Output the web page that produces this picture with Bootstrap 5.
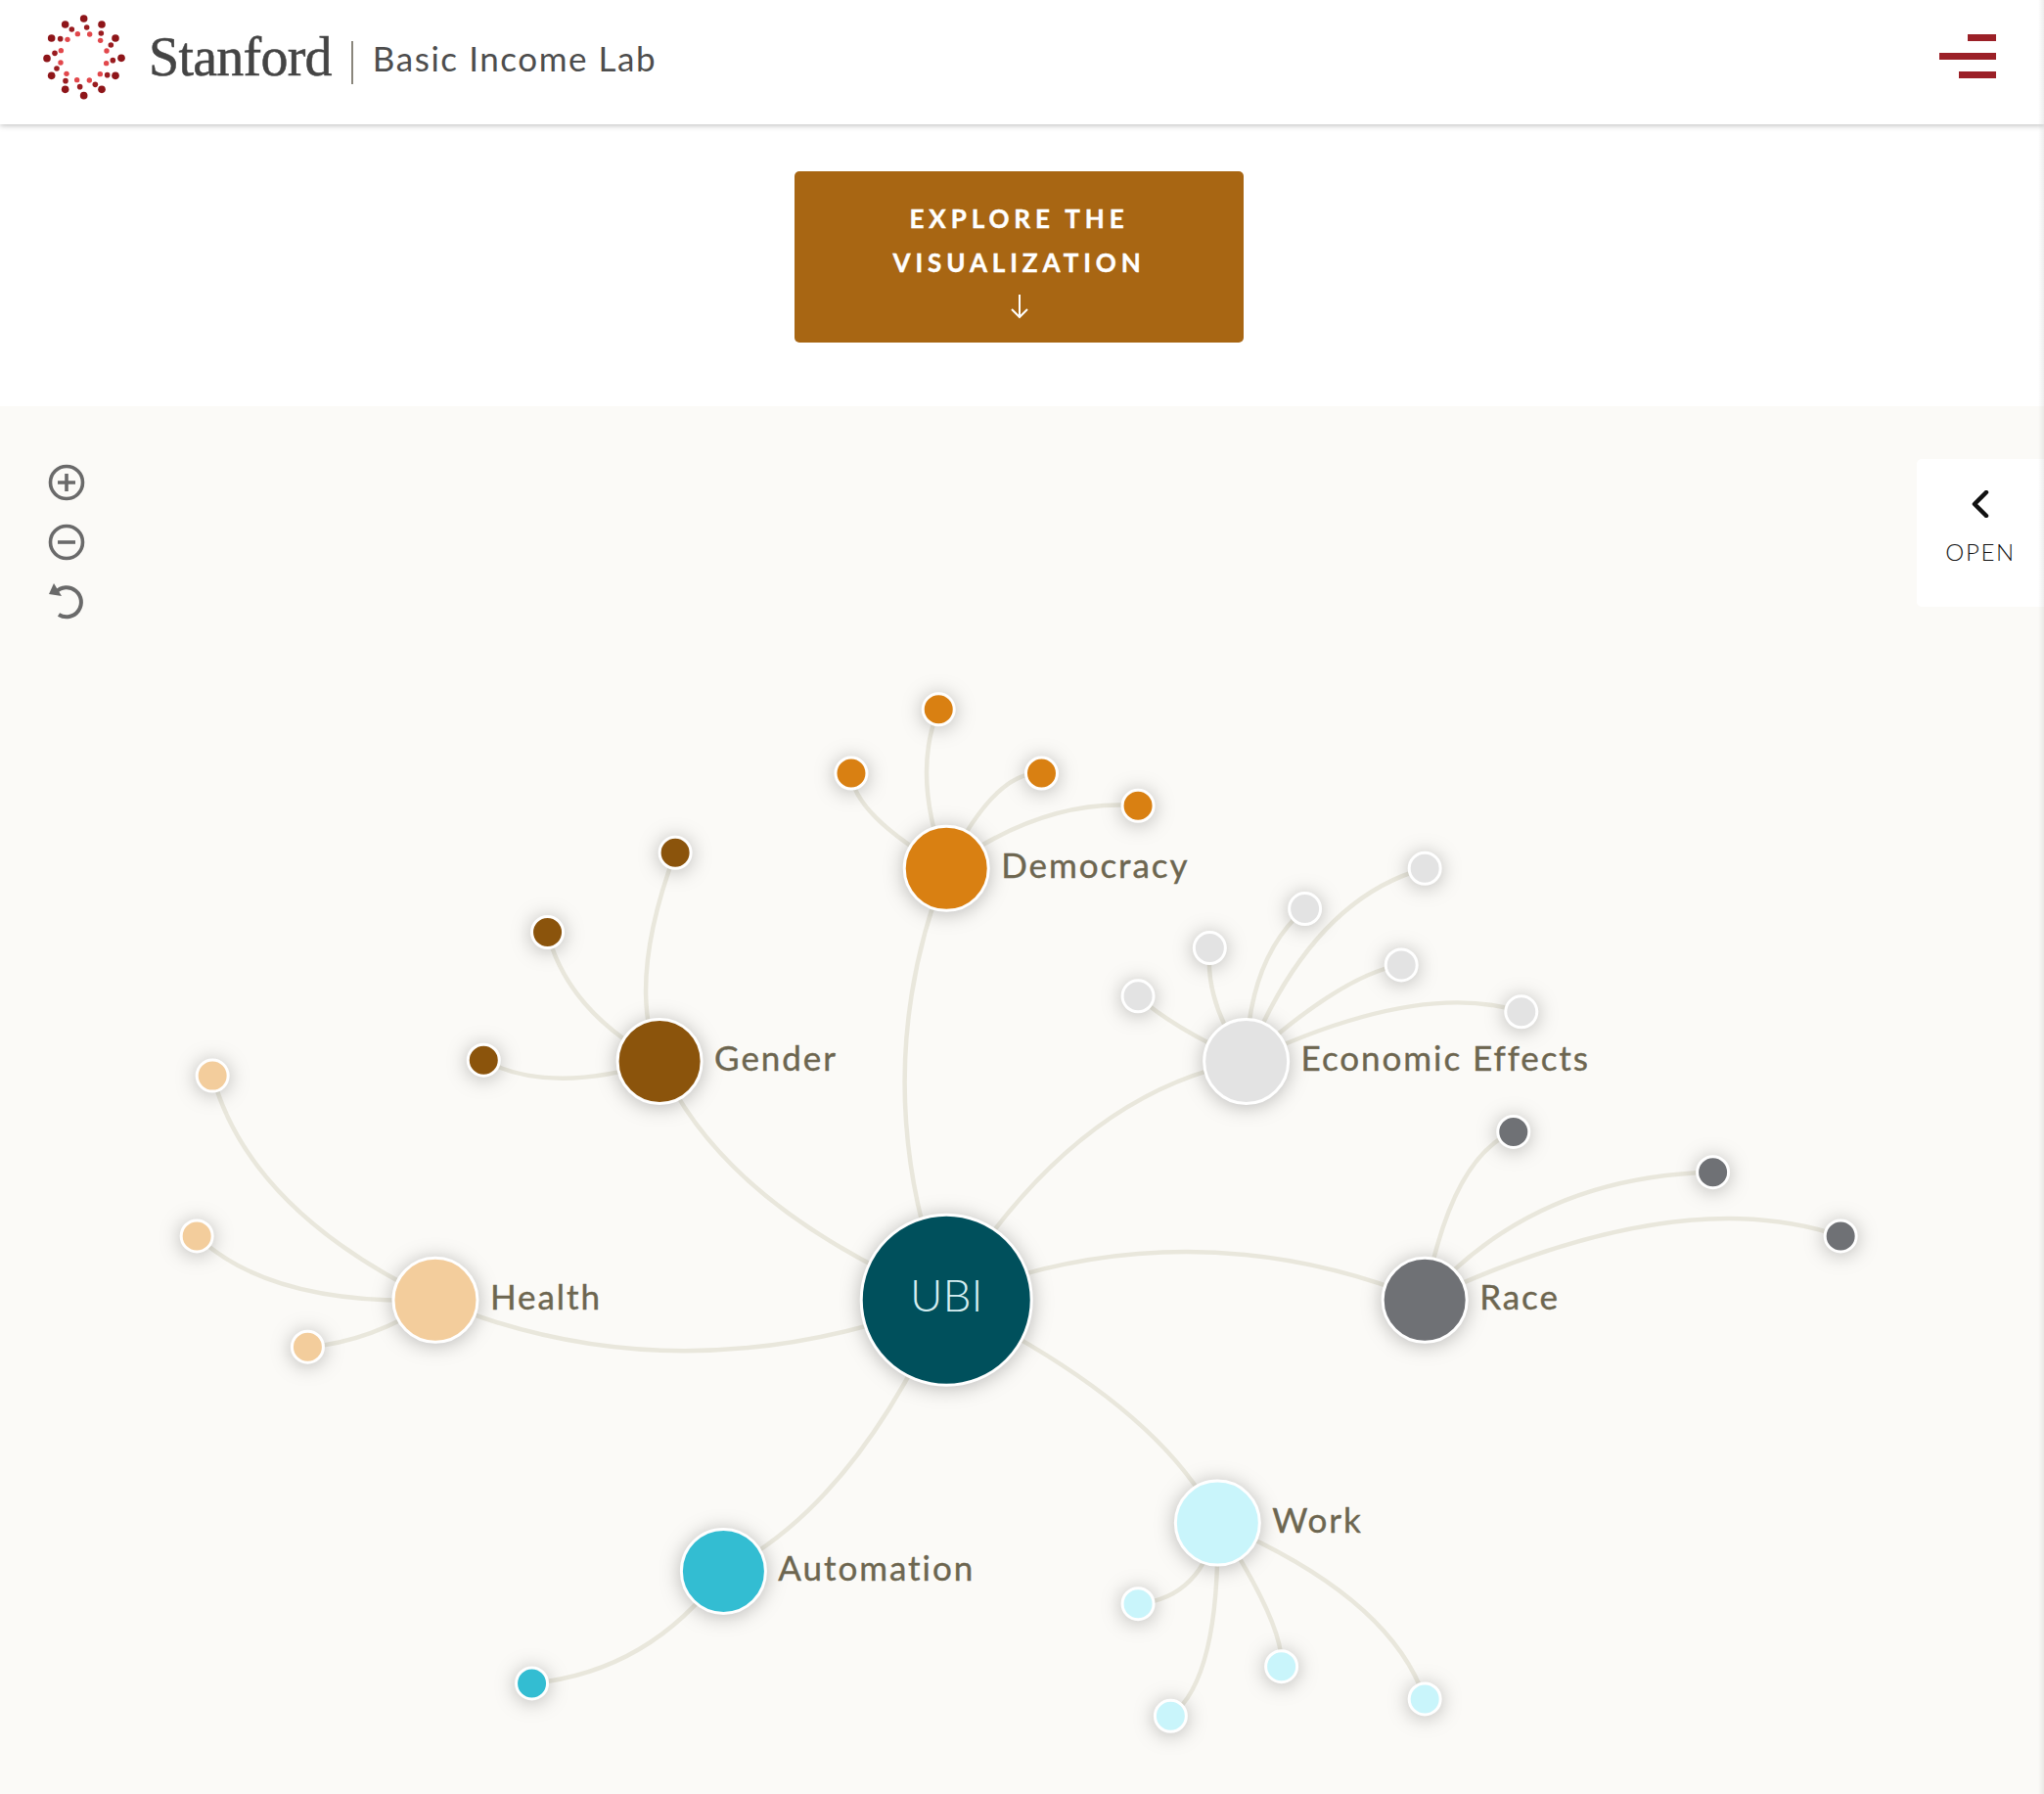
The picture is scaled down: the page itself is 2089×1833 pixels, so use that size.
<!DOCTYPE html>
<html lang="en">
<head>
    <meta charset="UTF-8">
    <meta name="viewport" content="width=device-width, initial-scale=1.0">
    <title>Basic Income Lab</title>
    <link href="https://cdn.jsdelivr.net/npm/bootstrap@5.3.0/dist/css/bootstrap.min.css" rel="stylesheet">
    <style>
        html, body { height: 100%; overflow: hidden; }
        body { font-family: "Lato", "Liberation Sans", sans-serif; background: #fff; }
        .lab-header { height: 127px; padding: 0 49px 0 30px; box-shadow: 0 1px 6px rgba(0,0,0,.28); position: relative; z-index: 2; }
        .lab-logo { width: 110px; height: 105px; margin-top: -13px; }
        .lab-stanford { font-family: "Liberation Serif", serif; font-size: 56px; color: #444; margin-left: 12px; letter-spacing: -.75px; line-height: 1; margin-top: -12px; -webkit-text-stroke: .5px #444; }
        .lab-divider { width: 2px; height: 44px; background: #8a867c; margin: 0 20px 0 20px; }
        .lab-name { font-size: 35px; color: #4d4d4d; letter-spacing: 1.55px; line-height: 1; margin-top: -9px; }
        .lab-menu { width: 58px; padding: 0; border: 0; background: none; gap: 12px; margin-top: -13px; }
        .lab-bar { display: block; height: 7px; background: #9b2027; }
        .lab-bar-s { width: 29px; }
        .lab-bar-l { width: 58px; }
        .lab-bar-m { width: 38px; }
        .lab-hero { height: 288px; padding: 48px 6px 0 0; }
        .lab-cta { width: 459px; height: 175px; background: #a86613; border: 0; border-radius: 5px; color: #fff; font-weight: 700; font-size: 26px; letter-spacing: 4.9px; line-height: 45px; padding: 26px 60px 0; -webkit-text-stroke: .4px #fff; }
        .lab-cta:hover { background: #a86613; color: #fff; }
        .lab-cta svg { display: block; margin: 9px auto 0; }
        .lab-graph { height: 1418px; background: #fbfaf7; }
        .lab-graph svg.lab-canvas { display: block; }
        .lab-tools { position: absolute; left: 48px; top: 58px; gap: 21px; }
        .lab-tools svg { display: block; }
        .lab-panel { position: absolute; right: 0; top: 54px; width: 130px; height: 151px; background: #fff; border-radius: 5px 0 0 5px; padding-top: 32px; color: #111; }
        .lab-panel span { font-size: 24px; letter-spacing: 1.6px; font-weight: 300; line-height: 1; margin-top: 23px; }
        .lab-edge { position: absolute; top: 0; right: 0; bottom: 0; width: 6px; background: linear-gradient(to right, rgba(0,0,0,0), rgba(0,0,0,.07)); z-index: 3; }
        .lab-link { fill: none; stroke: #e9e7dc; stroke-width: 4.5; }
        .lab-node { stroke: #fff; stroke-width: 3; filter: drop-shadow(0 2px 10px rgba(0,0,0,.26)); }
        .lab-label { font-family: "Lato", "Liberation Sans", sans-serif; font-size: 35px; letter-spacing: 1.95px; fill: #6d6650; stroke: #6d6650; stroke-width: .4; }
        .lab-center { font-family: "Lato", "Liberation Sans", sans-serif; font-weight: 300; font-size: 46px; fill: #d6eef1; }
    </style>
</head>
<body>

    <!-- Header -->
    <nav class="navbar lab-header bg-white flex-nowrap">
        <a class="d-flex align-items-center text-decoration-none" href="#">
            <svg class="lab-logo" id="logo" viewBox="0 0 330 315"></svg>
            <span class="lab-stanford">Stanford</span>
            <span class="lab-divider"></span>
            <span class="lab-name">Basic Income Lab</span>
        </a>
        <button class="lab-menu d-flex flex-column align-items-end" type="button" aria-label="Menu">
            <span class="lab-bar lab-bar-s"></span>
            <span class="lab-bar lab-bar-l"></span>
            <span class="lab-bar lab-bar-m"></span>
        </button>
    </nav>

    <!-- Button -->
    <div class="lab-hero d-flex justify-content-center align-items-start">
        <a class="btn lab-cta" href="#">
            EXPLORE THE VISUALIZATION
            <svg width="20" height="26" viewBox="0 0 20 26" fill="none" stroke="#fff" stroke-width="2"><path d="M10 1V24M2 16l8 8 8-8"/></svg>
        </a>
    </div>

    <!-- Graph -->
    <div class="lab-graph position-relative">
        <svg class="lab-canvas" id="graph" width="2089" height="1418" viewBox="0 415 2089 1418"></svg>

        <div class="lab-tools d-flex flex-column">
            <svg width="40" height="40" viewBox="0 0 40 40" fill="none" stroke="#6a6a6a" stroke-width="3.6"><circle cx="20" cy="20" r="16.5"/><path d="M20 11V29M11 20H29"/></svg>
            <svg width="40" height="40" viewBox="0 0 40 40" fill="none" stroke="#6a6a6a" stroke-width="3.6"><circle cx="20" cy="20" r="16.5"/><path d="M11 20H29"/></svg>
            <svg width="40" height="40" viewBox="0 0 40 40" fill="none" stroke="#6a6a6a" stroke-width="4"><path d="M9 10A15 15 0 1 1 12 33"/><path d="M7 1 2 12 15 14Z" fill="#6a6a6a" stroke="none"/></svg>
        </div>

        <div class="lab-panel d-flex flex-column align-items-center">
            <svg width="18" height="28" viewBox="0 0 18 28" fill="none" stroke="#111" stroke-width="4.5" stroke-linecap="round" stroke-linejoin="round"><path d="M15 2 3 14 15 26"/></svg>
            <span>OPEN</span>
        </div>
    </div>
    <div class="lab-edge"></div>

    <script>
        // logo dots, three rings in the svg's own units
        const DOTS = [
            [3.8*3, "#8e1519", [[167,42],[222,60],[264,102],[282,163],[264,217],[222,259],[167,278],[110,259],[68,217],[54,164],[68,102],[110,60]]],
            [2.8*3, "#9a1c20", [[176,69],[220,87],[250,123],[256,170],[239,215],[202,244],[155,251],[111,233],[84,195],[78,148],[95,104],[130,75]]],
            [2.7*3, "#e2474b", [[185,90],[218,109],[237,141],[236,179],[217,212],[184,231],[146,230],[114,211],[96,177],[97,140],[117,106],[148,89]]]
        ];
        let logo = "";
        DOTS.forEach(([r, color, list]) => {
            list.forEach(([x, y]) => { logo += `<circle cx="${x}" cy="${y}" r="${r}" fill="${color}"/>`; });
        });
        document.getElementById("logo").innerHTML = logo;

        // coordinates below were read off the picture at 1568 wide
        const S = 2089 / 1568;
        const GROUPS = [
            { name: "Democracy", at: [726,666], mid: [694,830], color: "#d98012", leaves: [[[720,544],[711,600]],[[653,593],[672,627]],[[799,593],[763,610]],[[873,618],[800,627]]] },
            { name: "Gender", at: [506,814], mid: [585,915], color: "#8b540c", leaves: [[[518,654],[496,745]],[[420,715],[449,770]],[[371,813],[430,827]]] },
            { name: "Economic Effects", at: [956,814], mid: [832,872], color: "#e3e3e3", leaves: [[[873,764],[906,788]],[[928,727],[933,770]],[[1001,697],[968,745]],[[1093,666],[1015,715]],[[1075,740],[1023,762]],[[1167,776],[1075,773]]] },
            { name: "Race", at: [1093,997], mid: [910,960], color: "#6f7175", leaves: [[[1161,868],[1120,910]],[[1314,899],[1190,925]],[[1412,948],[1270,939]]] },
            { name: "Work", at: [934,1168], mid: [860,1080], color: "#c9f5fb", leaves: [[[873,1230],[913,1212]],[[898,1316],[926,1265]],[[983,1278],[972,1235]],[[1093,1303],[1040,1230]]] },
            { name: "Automation", at: [555,1205], mid: [648,1128], color: "#33bdd2", leaves: [[[408,1291],[490,1265]]] },
            { name: "Health", at: [334,997], mid: [525,1036], color: "#f3cd9c", leaves: [[[163,825],[220,920]],[[151,948],[225,987]],[[236,1033],[285,1022]]] }
        ];
        const CENTER = [726,997];

        function link(a, b, m) {
            // quadratic curve through m at t = 0.5
            const cx = 2 * m[0] - (a[0] + b[0]) / 2, cy = 2 * m[1] - (a[1] + b[1]) / 2;
            return `<path class="lab-link" d="M${a[0]*S} ${a[1]*S}Q${cx*S} ${cy*S} ${b[0]*S} ${b[1]*S}"/>`;
        }
        function node(p, r, color) {
            return `<circle class="lab-node" cx="${p[0]*S}" cy="${p[1]*S}" r="${r}" fill="${color}"/>`;
        }

        let links = "", nodes = "", labels = "";
        GROUPS.forEach(g => {
            links += link(CENTER, g.at, g.mid);
            g.leaves.forEach(([p, m]) => {
                links += link(g.at, p, m);
                nodes += node(p, 16, g.color);
            });
            nodes += node(g.at, 43, g.color);
            labels += `<text class="lab-label" x="${(g.at[0] + 42) * S}" y="${(g.at[1] + 7.5) * S}">${g.name}</text>`;
        });
        nodes += node(CENTER, 87, "#00505c");
        labels += `<text class="lab-center" x="${CENTER[0]*S}" y="${CENTER[1]*S + 12}" text-anchor="middle">UBI</text>`;
        document.getElementById("graph").innerHTML = links + nodes + labels;
    </script>
    <script src="https://cdn.jsdelivr.net/npm/bootstrap@5.3.0/dist/js/bootstrap.bundle.min.js"></script>
</body>
</html>
